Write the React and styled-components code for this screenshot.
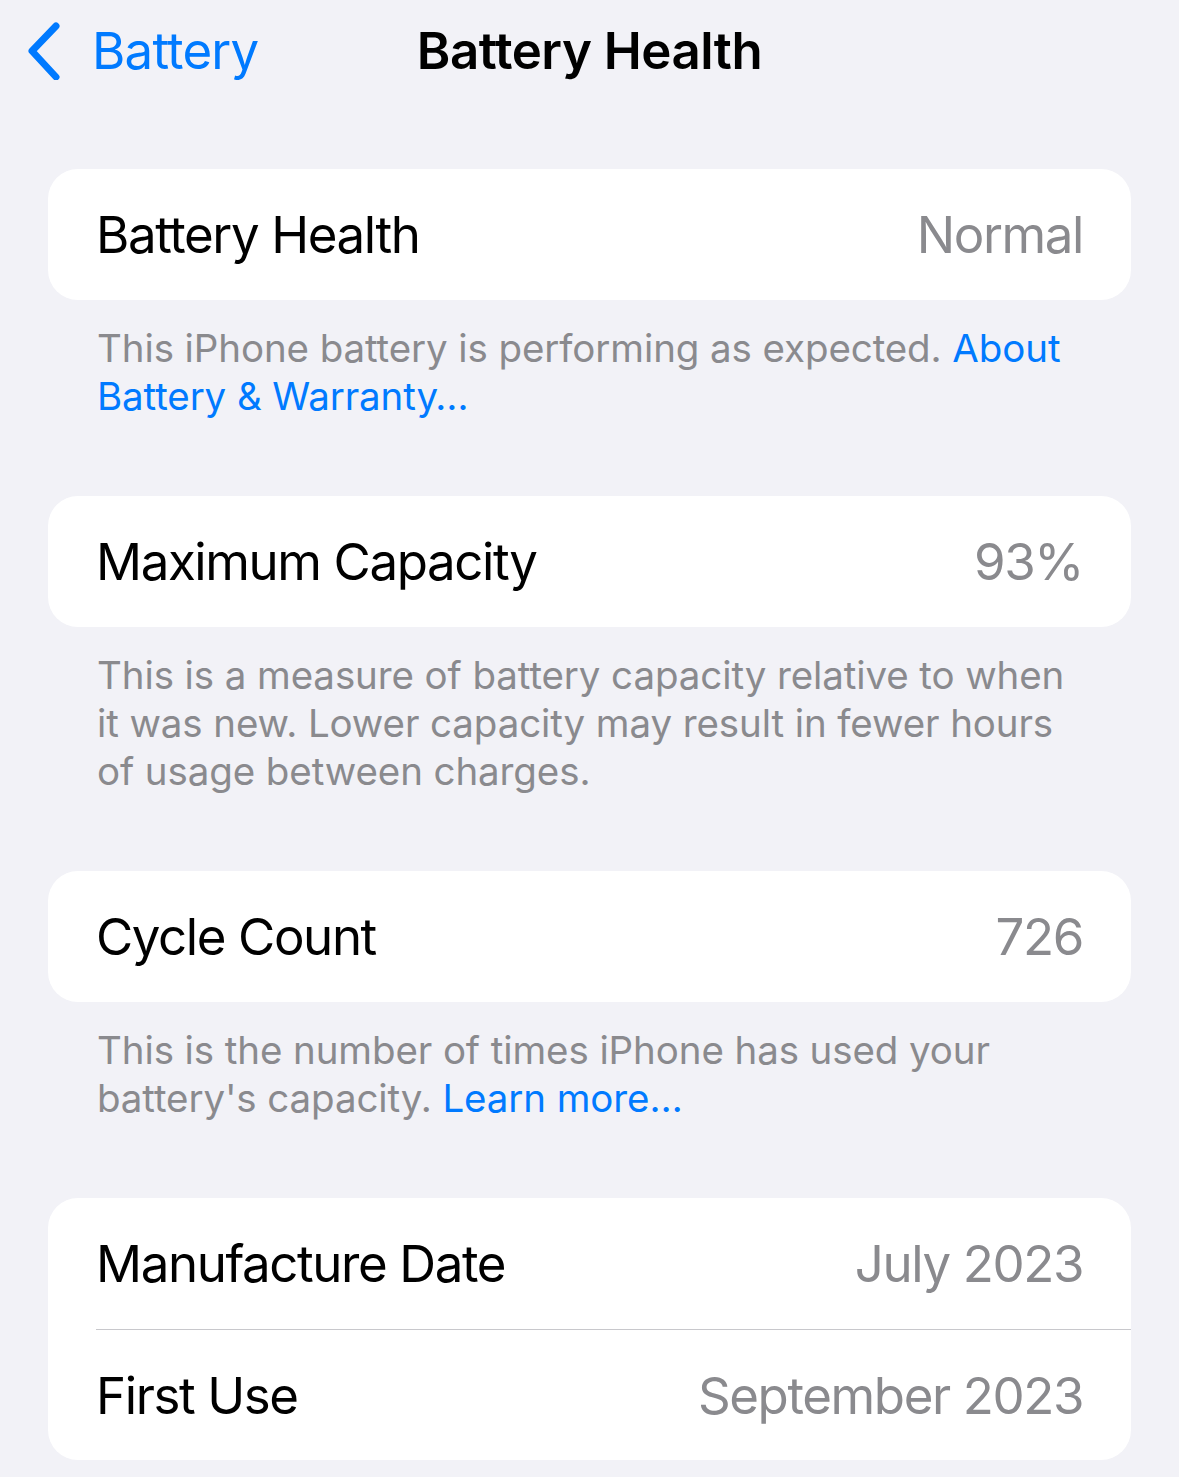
import React from 'react'
import styled, { createGlobalStyle } from 'styled-components'

const GlobalStyle = createGlobalStyle`
  html, body {
    margin: 0;
    padding: 0;
    background: #f2f2f7;
  }
  body {
    font-family: Inter, "Noto Sans", sans-serif;
    -webkit-font-smoothing: antialiased;
  }
`

const Page = styled.div`
  width: 1179px;
  min-height: 1477px;
  background: #f2f2f7;
`

const NavBar = styled.header`
  height: 100px;
  display: grid;
  grid-template-columns: 1fr auto 1fr;
  align-items: center;
`

const BackButton = styled.a`
  display: flex;
  align-items: center;
  gap: 26px;
  padding-left: 26px;
  color: #007aff;
  font-size: 51px;
  letter-spacing: -0.8px;
  text-decoration: none;
  svg {
    flex: none;
  }
`

const Title = styled.h1`
  margin: 0;
  font-size: 51px;
  font-weight: 600;
  letter-spacing: -0.5px;
  color: #000;
`

const Content = styled.main`
  padding: 69px 48px 0;
`

const Card = styled.section`
  background: #fff;
  border-radius: 30px;
  overflow: hidden;
`

const Row = styled.div`
  height: 131px;
  display: flex;
  align-items: center;
  justify-content: space-between;
  margin-left: 48px;
  padding-right: 48px;
  font-size: 51px;
  letter-spacing: -1.4px;
  border-top: ${p => (p.$divider ? '1.5px solid #c8c8cc' : 'none')};
  box-sizing: border-box;
`

const Label = styled.span`
  color: #000;
`

const Value = styled.span`
  color: #8a8a8e;
`

const Footer = styled.p`
  margin: 24px 0 76px;
  padding: 0 48px 0 49px;
  font-size: 38.5px;
  line-height: 48px;
  color: #8a8a8e;
  letter-spacing: -0.1px;
`

const Link = styled.a`
  color: #007aff;
  text-decoration: none;
`

const Chevron = () => (
  <svg width="40" height="60" viewBox="0 0 40 60">
    <path
      d="M30 6 L6 31 L30 57"
      fill="none"
      stroke="#007aff"
      strokeWidth="7"
      strokeLinecap="round"
      strokeLinejoin="round"
    />
  </svg>
)

const sections = [
  {
    rows: [['Battery Health', 'Normal']],
    footer: (
      <>
        This iPhone battery is performing as expected. <Link href="#">About Battery &amp; Warranty…</Link>
      </>
    ),
  },
  {
    rows: [['Maximum Capacity', '93%']],
    footer:
      'This is a measure of battery capacity relative to when it was new. Lower capacity may result in fewer hours of usage between charges.',
  },
  {
    rows: [['Cycle Count', '726']],
    footer: (
      <>
        This is the number of times iPhone has used your battery's capacity. <Link href="#">Learn more…</Link>
      </>
    ),
  },
  {
    rows: [
      ['Manufacture Date', 'July 2023'],
      ['First Use', 'September 2023'],
    ],
  },
]

export default function App() {
  return (
    <Page>
      <GlobalStyle />
      <NavBar>
        <BackButton href="#">
          <Chevron />
          Battery
        </BackButton>
        <Title>Battery Health</Title>
        <div />
      </NavBar>
      <Content>
        {sections.map((s, i) => (
          <React.Fragment key={i}>
            <Card>
              {s.rows.map(([label, value], j) => (
                <Row key={label} $divider={j > 0}>
                  <Label>{label}</Label>
                  <Value>{value}</Value>
                </Row>
              ))}
            </Card>
            {s.footer && <Footer>{s.footer}</Footer>}
          </React.Fragment>
        ))}
      </Content>
    </Page>
  )
}
